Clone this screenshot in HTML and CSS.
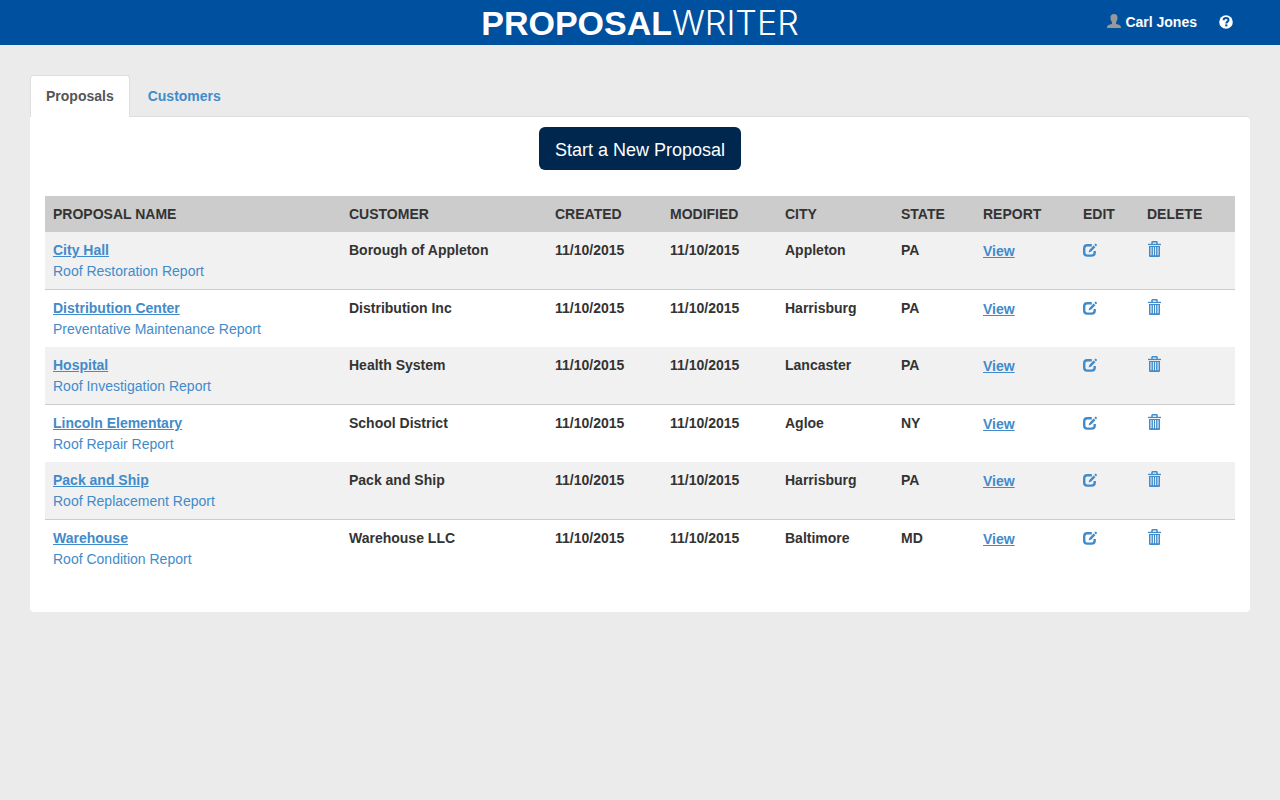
FILE: index.html
```html
<!DOCTYPE html>
<html lang="en">
<head>
    <meta charset="utf-8">
    <title>ProposalWriter</title>
    <link rel="stylesheet" href="styles.css">
</head>
<body>
    <!-- icons used more than once -->
    <svg class="sprite" aria-hidden="true">
        <symbol id="icon-edit" viewBox="0 0 14 14">
            <path d="M8.800 2.200H4.300Q1.200 2.200 1.200 5.300V9.500Q1.200 12.600 4.300 12.600H8.600Q11.700 12.600 11.700 9.500V8" fill="none" stroke="currentColor" stroke-width="2.400"/>
            <path d="M5.600 9.600L6.300 6.900L10.600 2.500L12.400 4.200L8.200 8.600ZM11.300 1.800L12.700 .4L14.200 1.900L12.900 3.400Z" fill="currentColor"/>
        </symbol>
        <symbol id="icon-trash" viewBox="0 0 14 16">
            <path d="M4.500 3V1.300Q4.500 .8 5 .8H9Q9.500 .8 9.500 1.300V3" fill="none" stroke="currentColor" stroke-width="1.500"/>
            <path d="M.5 2.800H13.500V4.100H.5Z" fill="currentColor"/>
            <path d="M1.500 5H12.500V15Q12.500 16 11.500 16H2.500Q1.500 16 1.500 15ZM3 6V14.300H4V6ZM5.400 6V14.300H6.400V6ZM7.600 6V14.300H8.600V6ZM10 6V14.300H11V6Z" fill="currentColor" fill-rule="evenodd"/>
        </symbol>
    </svg>

    <header class="navbar">
        <a href="#" class="logo"><b>PROPOSAL</b><span>WRITER</span></a>
        <nav class="user-nav">
            <a href="#" class="user">
                <svg class="icon-user" viewBox="0 0 14 14" aria-hidden="true">
                    <path d="M7 0C9.300 0 10.500 1.300 10.500 3.500C10.500 5.600 9.900 7.200 9 8.200V9.200C9 9.900 9.500 10.100 11 10.600C13.300 11.400 14 12 14 14H0C0 12 .7 11.400 3 10.600C4.500 10.100 5 9.900 5 9.200V8.200C4.100 7.200 3.500 5.600 3.500 3.500C3.500 1.300 4.700 0 7 0Z"/>
                </svg>
                Carl Jones
            </a>
            <a href="#" class="help" aria-label="Help">
                <svg viewBox="0 0 14 14" aria-hidden="true">
                    <circle cx="7" cy="7" r="6.800" fill="#fff"/>
                    <path d="M4.600 5.300C4.600 3.800 5.500 3 7.100 3C8.600 3 9.500 3.800 9.500 5C9.500 6.600 7.300 6.600 7.300 8.400" fill="none" stroke="#0050a0" stroke-width="2"/>
                    <path d="M6.200 9.400H8.400V11.400H6.200Z" fill="#0050a0"/>
                </svg>
            </a>
        </nav>
    </header>

    <main class="container">
        <nav class="tabs">
            <a href="#" class="tab active">Proposals</a>
            <a href="#" class="tab">Customers</a>
        </nav>

        <section class="panel">
            <div class="actions">
                <button type="button" class="btn-new">Start a New Proposal</button>
            </div>

            <table class="proposals">
                <colgroup>
                    <col>
                    <col class="col-customer">
                    <col class="col-date">
                    <col class="col-date">
                    <col class="col-city">
                    <col class="col-state">
                    <col class="col-report">
                    <col class="col-edit">
                    <col class="col-delete">
                </colgroup>
                <thead>
                    <tr>
                        <th>PROPOSAL NAME</th>
                        <th>CUSTOMER</th>
                        <th>CREATED</th>
                        <th>MODIFIED</th>
                        <th>CITY</th>
                        <th>STATE</th>
                        <th>REPORT</th>
                        <th>EDIT</th>
                        <th>DELETE</th>
                    </tr>
                </thead>
                <tbody>
                    <tr>
                        <td><a href="#" class="name">City Hall</a><a href="#" class="type">Roof Restoration Report</a></td>
                        <td>Borough of Appleton</td>
                        <td>11/10/2015</td>
                        <td>11/10/2015</td>
                        <td>Appleton</td>
                        <td>PA</td>
                        <td class="view"><a href="#">View</a></td>
                        <td><button type="button" class="btn-icon" aria-label="Edit"><svg class="edit"><use href="#icon-edit"/></svg></button></td>
                        <td><button type="button" class="btn-icon" aria-label="Delete"><svg class="trash"><use href="#icon-trash"/></svg></button></td>
                    </tr>
                    <tr>
                        <td><a href="#" class="name">Distribution Center</a><a href="#" class="type">Preventative Maintenance Report</a></td>
                        <td>Distribution Inc</td>
                        <td>11/10/2015</td>
                        <td>11/10/2015</td>
                        <td>Harrisburg</td>
                        <td>PA</td>
                        <td class="view"><a href="#">View</a></td>
                        <td><button type="button" class="btn-icon" aria-label="Edit"><svg class="edit"><use href="#icon-edit"/></svg></button></td>
                        <td><button type="button" class="btn-icon" aria-label="Delete"><svg class="trash"><use href="#icon-trash"/></svg></button></td>
                    </tr>
                    <tr>
                        <td><a href="#" class="name">Hospital</a><a href="#" class="type">Roof Investigation Report</a></td>
                        <td>Health System</td>
                        <td>11/10/2015</td>
                        <td>11/10/2015</td>
                        <td>Lancaster</td>
                        <td>PA</td>
                        <td class="view"><a href="#">View</a></td>
                        <td><button type="button" class="btn-icon" aria-label="Edit"><svg class="edit"><use href="#icon-edit"/></svg></button></td>
                        <td><button type="button" class="btn-icon" aria-label="Delete"><svg class="trash"><use href="#icon-trash"/></svg></button></td>
                    </tr>
                    <tr>
                        <td><a href="#" class="name">Lincoln Elementary</a><a href="#" class="type">Roof Repair Report</a></td>
                        <td>School District</td>
                        <td>11/10/2015</td>
                        <td>11/10/2015</td>
                        <td>Agloe</td>
                        <td>NY</td>
                        <td class="view"><a href="#">View</a></td>
                        <td><button type="button" class="btn-icon" aria-label="Edit"><svg class="edit"><use href="#icon-edit"/></svg></button></td>
                        <td><button type="button" class="btn-icon" aria-label="Delete"><svg class="trash"><use href="#icon-trash"/></svg></button></td>
                    </tr>
                    <tr>
                        <td><a href="#" class="name">Pack and Ship</a><a href="#" class="type">Roof Replacement Report</a></td>
                        <td>Pack and Ship</td>
                        <td>11/10/2015</td>
                        <td>11/10/2015</td>
                        <td>Harrisburg</td>
                        <td>PA</td>
                        <td class="view"><a href="#">View</a></td>
                        <td><button type="button" class="btn-icon" aria-label="Edit"><svg class="edit"><use href="#icon-edit"/></svg></button></td>
                        <td><button type="button" class="btn-icon" aria-label="Delete"><svg class="trash"><use href="#icon-trash"/></svg></button></td>
                    </tr>
                    <tr>
                        <td><a href="#" class="name">Warehouse</a><a href="#" class="type">Roof Condition Report</a></td>
                        <td>Warehouse LLC</td>
                        <td>11/10/2015</td>
                        <td>11/10/2015</td>
                        <td>Baltimore</td>
                        <td>MD</td>
                        <td class="view"><a href="#">View</a></td>
                        <td><button type="button" class="btn-icon" aria-label="Edit"><svg class="edit"><use href="#icon-edit"/></svg></button></td>
                        <td><button type="button" class="btn-icon" aria-label="Delete"><svg class="trash"><use href="#icon-trash"/></svg></button></td>
                    </tr>
                </tbody>
            </table>
        </section>
    </main>
</body>
</html>
```
FILE: styles.css
```css
* {
    box-sizing: border-box;
}
body {
    margin: 0;
    font-family: "Helvetica Neue", Helvetica, "Liberation Sans", Arial, sans-serif;
    font-size: 14px;
    line-height: 20px;
    color: #333;
    background-color: #ebebeb;
}
a {
    color: #428bca;
    text-decoration: none;
}
svg {
    display: block;
}
.sprite {
    display: none;
}

/* top bar */
.navbar {
    display: grid;
    grid-template-columns: 1fr auto 1fr;
    height: 45px;
    padding: 0 47px;
    background-color: #0050a0;
}
.logo {
    grid-column: 2;
    display: flex;
    align-items: baseline;
    font-size: 34px;
    line-height: 45px;
    color: #fff;
}
.logo span {
    font-family: Inter, sans-serif;
    font-weight: 300;
}
.user-nav {
    display: flex;
    justify-content: flex-end;
    align-items: center;
    gap: 22px;
    padding-bottom: 2px;
}
.user {
    display: flex;
    align-items: center;
    gap: 4px;
    font-weight: bold;
    color: #fff;
}
.icon-user {
    width: 14px;
    height: 14px;
    margin-bottom: 2px;
    fill: #999;
}
.help svg {
    width: 14px;
    height: 14px;
}

/* tabs */
.container {
    padding: 30px;
}
.tabs {
    display: flex;
    gap: 2px;
}
.tab {
    padding: 10px 15px;
    border: 1px solid transparent;
    border-bottom: 0;
    border-radius: 4px 4px 0 0;
    font-weight: bold;
}
.tab.active {
    margin-bottom: -1px;
    padding-bottom: 11px;
    border-color: #ddd;
    background-color: #fff;
    color: #555;
    z-index: 1;
}

.panel {
    padding: 10px 15px 35px;
    border-top: 1px solid #ddd;
    border-radius: 0 4px 4px 4px;
    background-color: #fff;
}
.actions {
    display: flex;
    justify-content: center;
    margin-bottom: 26px;
}
.btn-new {
    padding: 12px 16px 8px;
    border: 0;
    border-radius: 6px;
    background-color: #00284f;
    color: #fff;
    font-family: inherit;
    font-size: 18px;
    line-height: 23px;
    cursor: pointer;
}

/* proposal list */
.proposals {
    width: 100%;
    table-layout: fixed;
    border-collapse: separate;
    border-spacing: 0;
}
.col-customer {
    width: 206px;
}
.col-date {
    width: 115px;
}
.col-city {
    width: 116px;
}
.col-state {
    width: 82px;
}
.col-report {
    width: 100px;
}
.col-edit {
    width: 64px;
}
.col-delete {
    width: 96px;
}
.proposals th {
    padding: 8px;
    background-color: #ccc;
    text-align: left;
}
.proposals td {
    padding: 8px;
    vertical-align: top;
    font-weight: bold;
}
.proposals tbody tr:nth-child(odd) td {
    background-color: #f1f1f1;
}
.proposals tbody tr:nth-child(even) td {
    border-top: 1px solid #ccc;
}
.proposals .name {
    display: table;
    text-decoration: underline;
}
.proposals .type {
    display: block;
    margin-top: 1px;
    font-weight: normal;
}
.proposals .view {
    padding-top: 9px;
}
.view a {
    text-decoration: underline;
}
.btn-icon {
    display: block;
    padding: 0;
    border: 0;
    background: none;
    color: #428bca;
    cursor: pointer;
}
.btn-icon .edit {
    width: 14px;
    height: 14px;
    margin-top: 3px;
}
.btn-icon .trash {
    width: 15px;
    height: 16px;
    margin-top: 1px;
}
```
